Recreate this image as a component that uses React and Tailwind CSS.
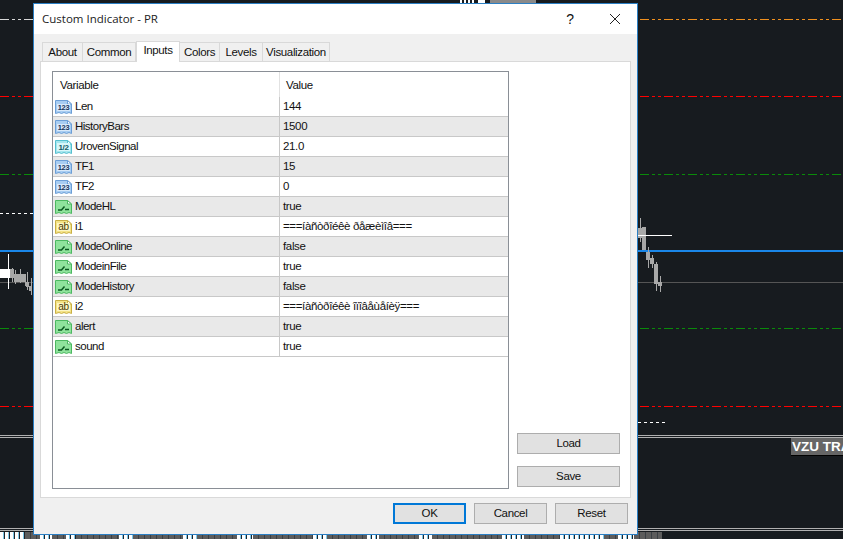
const ROWS = [
  ["n", "Len", "144"],
  ["n", "HistoryBars", "1500"],
  ["f", "UrovenSignal", "21.0"],
  ["n", "TF1", "15"],
  ["n", "TF2", "0"],
  ["b", "ModeHL", "true"],
  ["s", "i1", "===íàñòðîéêè ðåæèìîâ==="],
  ["b", "ModeOnline", "false"],
  ["b", "ModeinFile", "true"],
  ["b", "ModeHistory", "false"],
  ["s", "i2", "===íàñòðîéêè îïîâåùåíèÿ==="],
  ["b", "alert", "true"],
  ["b", "sound", "true"],
];

const SCHEME = {
  n: ["#6b9ed6", "#a8cdf2", "#d8e9fa"],
  f: ["#55bfcf", "#a5e6ee", "#d9f7fa"],
  b: ["#4cb861", "#8fe39c", "#c6f5cb"],
  s: ["#c9b045", "#f4e388", "#fdf6c4"],
};

function RowIcon({ kind }) {
  const [edge, fill, inner] = SCHEME[kind];
  return (
    <svg width="17" height="17" viewBox="0 0 17 17" className="shrink-0">
      <path d="M0.5 2.5H12.5L16.5 6V15.5L14 14.5L11.5 15.5L9 14.5L6.5 15.5L4 14.5L0.5 15.5Z" fill={fill} stroke={edge} />
      <path d="M12.5 2.5V6H16.5Z" fill="#fff" stroke={edge} />
      {kind === "b" && (
        <path d="M3 12H6.5L9.5 8.5M10 11.5H14" fill="none" stroke="#0b5a20" strokeWidth="1.5" />
      )}
      {kind === "n" && (
        <>
          <rect x="2" y="6" width="13" height="7" fill={inner} />
          <text x="8.5" y="12.4" textAnchor="middle" fontSize="7.5" fontWeight="700" fontFamily="'Liberation Sans', sans-serif" fill="#14345c">123</text>
        </>
      )}
      {kind === "f" && (
        <>
          <rect x="2" y="5" width="13" height="8" fill={inner} />
          <text x="8.5" y="12" textAnchor="middle" fontSize="8" fontWeight="700" fontFamily="'Liberation Sans', sans-serif" fill="#125a66">1/2</text>
        </>
      )}
      {kind === "s" && (
        <>
          <rect x="2" y="5" width="13" height="8" fill={inner} />
          <text x="8.5" y="12.4" textAnchor="middle" fontSize="10" fontFamily="'Liberation Sans', sans-serif" fill="#4a3c00">ab</text>
        </>
      )}
    </svg>
  );
}

function Tab({ label, active, w }) {
  return active ? (
    <div className={`${w} h-[21px] -mb-px -mt-0.5 z-10 bg-white border border-b-0 border-[#d9d9d9] flex items-center justify-center pb-0.5`}>{label}</div>
  ) : (
    <div className={`${w} h-[19px] bg-[#f0f0f0] border border-l-0 first:border-l border-b-0 border-[#d9d9d9] flex items-center justify-center pt-0.5`}>{label}</div>
  );
}

function Btn({ label, primary }) {
  return (
    <div className={`w-[73px] h-[21px] bg-[#e1e1e1] flex items-center justify-center ${primary ? "border-2 border-[#0078d7]" : "border border-[#adadad]"}`}>{label}</div>
  );
}

function SideBtn({ label }) {
  return <div className="w-[103px] h-[21px] bg-[#e1e1e1] border border-[#adadad] flex items-center justify-center">{label}</div>;
}

function DashLine({ y, x, w, color, dash }) {
  return (
    <svg className="absolute" style={{ left: x, top: y - 1 }} width={w} height={3}>
      <line x1="0" x2={w} y1="1.5" y2="1.5" stroke={color} strokeWidth={1} strokeDasharray={dash} />
    </svg>
  );
}

const DD = "9 3 3 3 3 3";

const RIGHT_CANDLES = [
  [638, 218, 242, 228, 238, 8, 640],
  [642, 227, 250, 227, 250, 4, 644],
  [646, 247, 268, 252, 260, 4, 648],
  [650, 255, 268, 258, 264, 4, 652],
  [654, 262, 291, 264, 284, 4, 656],
  [658, 276, 292, 282, 286, 4, 660],
];

const LEFT_CANDLES = [
  [10, 268, 282, 269, 278, 4, 12],
  [14, 270, 284, 274, 282, 4, 15],
  [18, 269, 283, 274, 282, 4, 20],
  [22, 274, 286, 274, 282, 4, 25],
  [26, 272, 290, 282, 287, 3, 27],
  [29, 278, 295, 286, 291, 3, 31],
];

const STRIP = [
  [25, "w"], [15, "g"], [12, "w"], [14, "g"], [10, "w"], [43, "g"], [14, "w"], [50, "g"], [14, "w"], [40, "g"],
  [16, "w"], [60, "g"], [14, "w"], [40, "g"], [12, "w"], [40, "g"], [13, "w"], [70, "g"], [22, "w"], [36, "g"],
  [44, "w"], [14, "g"], [16, "w"], [142, "g"],
];

function Candle({ c }) {
  const [x, hi, lo, o, b, w, wx] = c;
  return (
    <div>
      <div className="absolute w-px bg-[#a8a8a8]" style={{ left: wx, top: hi, height: lo - hi }} />
      <div className="absolute bg-[#a8a8a8]" style={{ left: x, top: o, height: b - o, width: w }} />
    </div>
  );
}

function Chart() {
  return (
    <>
      <DashLine y={19} x={0} w={33} color="#d8d8d8" dash={DD} />
      <DashLine y={19} x={640} w={203} color="#f0901e" dash={DD} />
      {[96, 406].map((y) => (
        <div key={y}>
          <DashLine y={y} x={0} w={33} color="#ff0000" dash={DD} />
          <DashLine y={y} x={640} w={203} color="#ff0000" dash={DD} />
        </div>
      ))}
      {[174, 328].map((y) => (
        <div key={y}>
          <DashLine y={y} x={0} w={33} color="#0a8a0a" dash={DD} />
          <DashLine y={y} x={640} w={203} color="#0a8a0a" dash={DD} />
        </div>
      ))}
      <DashLine y={213} x={0} w={33} color="#ffffff" dash="3 3" />
      <DashLine y={422} x={638} w={28} color="#ffffff" dash="3 3" />
      <div className="absolute left-0 w-[843px] top-[250px] h-0.5 bg-[#1a86e8]" />
      <div className="absolute left-0 w-[843px] top-[282px] h-px bg-[#555]" />
      <div className="absolute left-0 w-[843px] top-[435px] h-px bg-[#b0b0b0]" />
      <div className="absolute left-0 w-[843px] top-[437px] h-px bg-[#b0b0b0]" />
      <div className="absolute left-0 w-[843px] top-[528px] h-px bg-[#b0b0b0]" />
      <div className="absolute left-0 w-[843px] top-[530px] h-px bg-[#b0b0b0]" />
      {RIGHT_CANDLES.map((c) => <Candle key={c[0]} c={c} />)}
      {LEFT_CANDLES.map((c) => <Candle key={c[0]} c={c} />)}
      <div className="absolute left-[638px] top-[235px] w-[34px] h-px bg-white" />
      <div className="absolute left-0 top-[269px] w-[10px] h-[9px] bg-white" />
      <div className="absolute left-[8px] top-[254px] w-px h-[35px] bg-white" />
      <div className="absolute left-[791px] top-[438px] h-[18px] w-[52px] overflow-hidden bg-[#666] text-white font-bold text-[13.5px] tracking-normal leading-[18px] pl-px whitespace-nowrap border-b border-black">VZU TRA</div>
      <div className="absolute left-0 top-[532px] w-[662px] h-[7px] overflow-hidden flex">
        {STRIP.map(([w, k], i) => (
          <div
            key={i}
            className={k === "w"
              ? "h-[7px] shrink-0 bg-[repeating-linear-gradient(90deg,#ffffff_0_3px,#7fc8e8_3px_4px,#20242a_4px_5px)]"
              : "h-[7px] shrink-0 bg-[repeating-linear-gradient(90deg,#5c5c5c_0_5px,#3a3f44_5px_6px)]"}
            style={{ width: w }}
          />
        ))}
      </div>
      <div className="absolute left-[460px] top-0 w-[14px] h-[3px] bg-[repeating-linear-gradient(90deg,#ffffff_0_2px,#171b1f_2px_4px)]" />
      <div className="absolute left-[478px] top-0 w-[7px] h-[3px] bg-white" />
      <div className="absolute left-[490px] top-0 w-[46px] h-[3px] bg-[#8a8a8a]" />
    </>
  );
}

export default function App() {
  return (
    <div className="relative w-[843px] h-[539px] overflow-hidden bg-[#171b1f] text-[11.5px] tracking-[-0.35px] text-[#111] font-['Liberation_Sans',sans-serif]">
      <Chart />
      <div className="absolute left-[33px] top-[3px] w-[605px] h-[532px] bg-[#f0f0f0] border border-[#2b7fc4] flex flex-col">
        <div className="h-[30px] bg-white flex items-center pl-2 shrink-0">
          <span className="text-[11.5px] tracking-normal font-['Open_Sans',sans-serif] text-[#222] flex-1">Custom Indicator - PR</span>
          <span className="w-[20px] text-center text-[14px] font-['Liberation_Sans',sans-serif]">?</span>
          <svg width="12" height="12" viewBox="0 0 12 12" className="mr-[16px] ml-[29px]">
            <path d="M1 1L11 11M11 1L1 11" stroke="#222" strokeWidth="1" />
          </svg>
        </div>
        <div className="flex flex-col flex-1 px-1.5 pt-2 min-h-0">
          <div className="flex items-end pl-[2px] h-[19px] shrink-0">
            <Tab label="About" w="w-[41px]" />
            <Tab label="Common" w="w-[53px]" />
            <Tab label="Inputs" w="w-[44px]" active />
            <Tab label="Colors" w="w-[40px]" />
            <Tab label="Levels" w="w-[43px]" />
            <Tab label="Visualization" w="w-[67px]" />
          </div>
          <div className="w-[591px] h-[437px] bg-white border border-[#d9d9d9] flex pl-[11px] pt-[9px] gap-2 shrink-0">
            <div className="w-[457px] h-[418px] border border-[#8a8f96] flex flex-col shrink-0">
              <div className="flex h-[25px] shrink-0">
                <div className="w-[227px] pl-[7px] pt-0.5 flex items-center border-r border-[#e2e2e2]">Variable</div>
                <div className="pl-[6px] pt-0.5 flex items-center">Value</div>
              </div>
              {ROWS.map(([kind, name, value], i) => (
                <div key={name} className={`flex h-5 shrink-0 border-b border-[#c8c8c8] ${i % 2 ? "bg-[#e9e9e9]" : "bg-white"}`}>
                  <div className="w-[227px] pl-[2px] flex items-center gap-[3px] border-r border-[#c8c8c8]">
                    <RowIcon kind={kind} />
                    <span className="pt-px tracking-[-0.5px]">{name}</span>
                  </div>
                  <div className="pl-[3px] pt-px flex items-center">{value}</div>
                </div>
              ))}
            </div>
            <div className="flex flex-col justify-end gap-3 pb-[10px]">
              <SideBtn label="Load" />
              <SideBtn label="Save" />
            </div>
          </div>
          <div className="flex justify-end gap-2 pr-[3px] pt-[5px]">
            <Btn label="OK" primary />
            <Btn label="Cancel" />
            <Btn label="Reset" />
          </div>
        </div>
      </div>
    </div>
  );
}
